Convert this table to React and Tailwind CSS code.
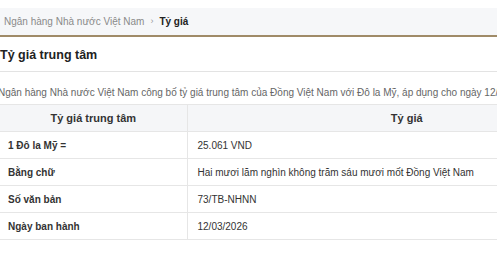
import React from 'react';

const rows = [
  { label: '1 Đô la Mỹ =', value: '25.061 VND' },
  { label: 'Bằng chữ', value: 'Hai mươi lăm nghìn không trăm sáu mươi mốt Đồng Việt Nam' },
  { label: 'Số văn bản', value: '73/TB-NHNN' },
  { label: 'Ngày ban hành', value: '12/03/2026' },
];

function App() {
  return (
    <div className="h-[261px] w-[497px] overflow-hidden bg-white pt-2 font-['Liberation_Sans',Arial,sans-serif]">
      <nav className="flex h-[29px] items-center gap-[6px] border-b-2 border-[#a08b68] bg-[#f6f7f9] pl-1 text-[10px] text-[#8a8a8a]">
        <span>Ngân hàng Nhà nước Việt Nam</span>
        <span className="text-[9px] text-[#999]">›</span>
        <span className="font-bold text-[#222]">Tỷ giá</span>
      </nav>

      <h1 className="border-b border-[#e3e3e3] pt-[9px] pb-[7px] text-[12.5px] leading-[18px] font-bold text-[#222]">Tỷ giá trung tâm</h1>

      <p className="mt-[13px] -ml-[2px] whitespace-nowrap text-[10px] leading-[16px] text-[#666]">
        Ngân hàng Nhà nước Việt Nam công bố tỷ giá trung tâm của Đồng Việt Nam với Đô la Mỹ, áp dụng cho ngày 12/03/2026.
      </p>

      <table className="mt-[3px] w-[626px] border-collapse text-[10px] text-[#333]">
        <thead className="bg-[#f5f6f8]">
          <tr className="h-[27px] border-y border-[#e6e6e6] text-[11px]">
            <th className="w-[187px] border-r border-[#e6e6e6] font-bold">Tỷ giá trung tâm</th>
            <th className="font-bold">Tỷ giá</th>
          </tr>
        </thead>
        <tbody>
          {rows.map((row) => (
            <tr key={row.label} className="h-[27px] border-b border-[#e6e6e6]">
              <td className="border-r border-[#e6e6e6] pl-[8px] font-bold">{row.label}</td>
              <td className="pl-[10px]">{row.value}</td>
            </tr>
          ))}
        </tbody>
      </table>
    </div>
  );
}

export default App;
